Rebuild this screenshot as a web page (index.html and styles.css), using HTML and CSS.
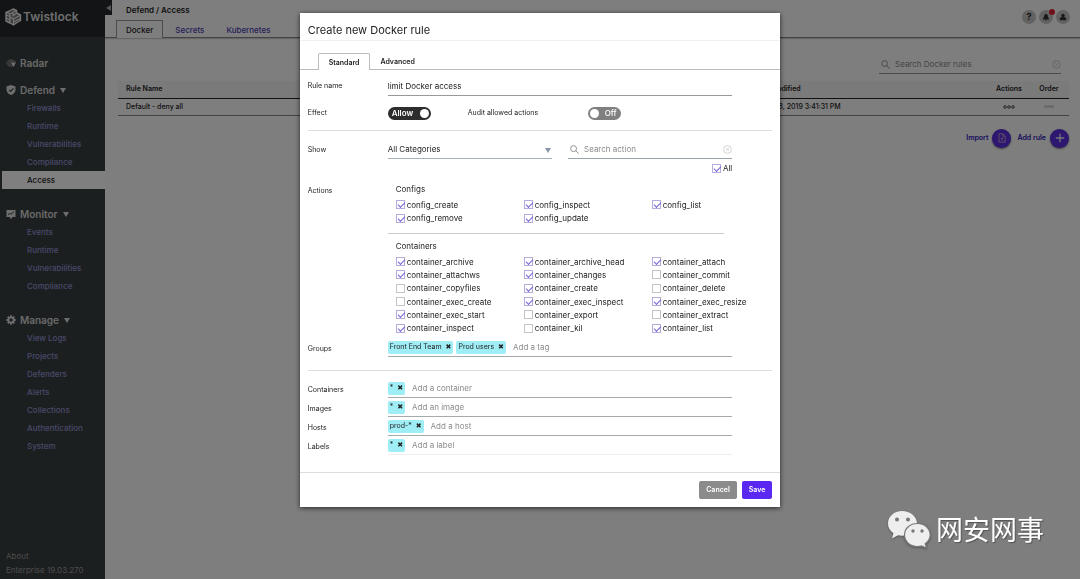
FILE: index.html
```html
<!DOCTYPE html>
<html lang="en">
<head>
<meta charset="utf-8">
<title>Twistlock - Defend / Access</title>
<link rel="stylesheet" href="styles.css">
</head>
<body>
<div class="app">
  <aside class="sidebar">
    <div class="brand">
      <svg class="brand-mark" viewBox="0 0 17 18" fill="none" stroke="#eee" stroke-width="1.200" stroke-linejoin="round">
        <path d="M1 4.500L4.500 3 8 1l3.500 1.500V5L15.500 7v5.500L12 14.500 8.500 17 5 15 1 13z" fill="#777" stroke-width="1.400"/>
        <path d="M1 4.500L5 6l6.500-3.500M5 6v2.500L1 7M5 8.500v6.500M8.500 17v-6L5 9M8.500 11l7-4M8.500 14l7-3.500M8 5v3l3.500-3M1 10l4 2"/>
      </svg>
      <span class="brand-name">Twistlock</span>
    </div>
    <button class="collapse" aria-label="Collapse menu"><svg viewBox="0 0 5 6"><path d="M5 0v6L0 3z" fill="#aaa"/></svg></button>
    <nav class="menu">
      <div class="group group-radar">
        <a class="head" href="#"><svg class="head-icon" viewBox="0 0 10 10"><path d="M.5 3Q5-.5 9.500 3v1.500H4zM0 4l3.500.5L7 9Q1 9.500 0 4z" fill="#777"/><path d="M4.500 4.500H10L7.500 9z" fill="#ddd"/></svg>Radar</a>
      </div>
      <div class="group">
        <a class="head" href="#"><svg class="head-icon" viewBox="0 0 10 10"><path d="M5 0l4.500 1.500V5Q9 8.500 5 10 1 8.500.5 5V1.500z" fill="#ddd"/><path d="M3 4.800l1.600 1.600L7.500 3.400" fill="none" stroke="#383e40" stroke-width="1.200"/></svg>Defend<i class="caret"></i></a>
        <a class="item" href="#">Firewalls</a>
        <a class="item" href="#">Runtime</a>
        <a class="item" href="#">Vulnerabilities</a>
        <a class="item" href="#">Compliance</a>
        <a class="item active" href="#">Access</a>
      </div>
      <div class="group">
        <a class="head" href="#"><svg class="head-icon" viewBox="0 0 10 10"><path d="M.5 1h9v7H6v1.500H4V8H.5z" fill="#ddd"/><path d="M2 5.800l2-1.500 1 1L8 2.500" fill="none" stroke="#383e40"/></svg>Monitor<i class="caret"></i></a>
        <a class="item" href="#">Events</a>
        <a class="item" href="#">Runtime</a>
        <a class="item" href="#">Vulnerabilities</a>
        <a class="item" href="#">Compliance</a>
      </div>
      <div class="group">
        <a class="head" href="#"><svg class="head-icon" viewBox="0 0 10 10" fill="none" stroke="#ddd" stroke-width="1.800"><circle cx="5" cy="5" r="2.700"/><path d="M5 .3v1.700M5 8v1.700M.3 5H2M8 5h1.700M1.700 1.700l1.200 1.200M7.100 7.100l1.200 1.200M1.700 8.300l1.200-1.200M7.100 2.900l1.200-1.200"/></svg>Manage<i class="caret"></i></a>
        <a class="item" href="#">View Logs</a>
        <a class="item" href="#">Projects</a>
        <a class="item" href="#">Defenders</a>
        <a class="item" href="#">Alerts</a>
        <a class="item" href="#">Collections</a>
        <a class="item" href="#">Authentication</a>
        <a class="item" href="#">System</a>
      </div>
    </nav>
    <footer class="version"><span>About</span><span>Enterprise 19.03.270</span></footer>
  </aside>

  <main class="main">
    <header class="topbar">
      <div class="topbar-left">
        <h1 class="crumb">Defend / Access</h1>
        <nav class="tabs">
          <a class="tab current" href="#">Docker</a>
          <a class="tab" href="#">Secrets</a>
          <a class="tab" href="#">Kubernetes</a>
        </nav>
      </div>
      <div class="tools">
        <button class="tool" aria-label="Help">?</button>
        <button class="tool" aria-label="Notifications"><svg viewBox="0 0 10 10"><path d="M5 1Q7.500 1.500 7.500 4.500L9 8H1l1.500-3.500Q2.500 1.500 5 1zM4 8.500h2L5 10z" fill="#333"/></svg><i class="dot"></i></button>
        <button class="tool" aria-label="Account"><svg viewBox="0 0 10 10"><circle cx="5" cy="3" r="2.200" fill="#333"/><path d="M1 9V7Q1 5 3.500 5h3Q9 5 9 7v2z" fill="#333"/></svg></button>
      </div>
    </header>
    <section class="content">
      <label class="search page-search">
        <svg class="lens" viewBox="0 0 10 10" fill="none" stroke="currentColor"><circle cx="4" cy="4" r="3.200"/><path d="M6.300 6.300L9.500 9.500"/></svg>
        <input type="text" placeholder="Search Docker rules" aria-label="Search Docker rules">
        <svg class="clear" viewBox="0 0 10 10" fill="none" stroke="currentColor" stroke-width=".8"><circle cx="5" cy="5" r="4.300"/><path d="M3.300 3.300l3.400 3.400M6.700 3.300L3.300 6.700"/></svg>
      </label>
      <table class="rules">
        <thead><tr><th>Rule Name</th><th class="col-date">Modified</th><th class="col-act">Actions</th><th class="col-order">Order</th></tr></thead>
        <tbody><tr><td>Default - deny all</td><td class="col-date">Apr 8, 2019 3:41:31 PM</td>
          <td class="col-act"><svg class="dots" viewBox="0 0 12 4" fill="none" stroke="#222" stroke-width=".8"><circle cx="2" cy="2" r="1.300"/><circle cx="6" cy="2" r="1.300"/><circle cx="10" cy="2" r="1.300"/></svg></td>
          <td class="col-order"><i class="grip"></i></td></tr></tbody>
      </table>
      <div class="page-actions">
        <button class="page-action">Import<span class="disc"><svg viewBox="0 0 10 10" fill="none" stroke="#c8a8c8" stroke-width=".9"><path d="M2 .8h4l2.200 2.200v6.200H2zM5.800 1v2.200H8M5 8V4.800M3.700 6L5 4.700 6.300 6"/></svg></span></button>
        <button class="page-action">Add rule<span class="disc"><svg viewBox="0 0 10 10" fill="none" stroke="#eee" stroke-width="1.300"><path d="M5 .8v8.400M.8 5h8.400"/></svg></span></button>
      </div>
    </section>
  </main>
</div>

<div class="backdrop">
  <form class="modal" role="dialog" aria-labelledby="title">
    <h2 class="modal-title" id="title">Create new Docker rule</h2>
    <div class="modal-tabs">
      <button type="button" class="modal-tab selected">Standard</button>
      <button type="button" class="modal-tab">Advanced</button>
    </div>
    <div class="modal-body">
      <div class="row row-name">
        <label for="name">Rule name</label>
        <input class="line-input" id="name" type="text" value="limit Docker access">
      </div>
      <div class="row row-effect">
        <label for="effect">Effect</label>
        <div class="effect">
          <span class="toggle on"><input id="effect" type="checkbox" checked><span>Allow</span></span>
          <label class="audit" for="audit">Audit allowed actions</label>
          <span class="toggle"><input id="audit" type="checkbox"><span>Off</span></span>
        </div>
      </div>
      <div class="row row-show">
        <label for="show">Show</label>
        <div class="filters">
          <div class="select"><select id="show"><option>All Categories</option></select></div>
          <div class="filter-search">
            <label class="search">
              <svg class="lens" viewBox="0 0 10 10" fill="none" stroke="currentColor"><circle cx="4" cy="4" r="3.300"/><path d="M6.400 6.400L9.500 9.500"/></svg>
              <input type="text" placeholder="Search action" aria-label="Search action">
              <svg class="clear" viewBox="0 0 10 10" fill="none" stroke="currentColor" stroke-width=".7"><circle cx="5" cy="5" r="4.300"/><path d="M3.300 3.300l3.400 3.400M6.700 3.300L3.300 6.700"/></svg>
            </label>
            <label class="check all"><input type="checkbox" checked>All</label>
          </div>
        </div>
      </div>
      <div class="row row-actions">
        <span class="row-label">Actions</span>
        <div class="sets">
          <fieldset class="set">
            <legend>Configs</legend>
            <div class="checks two">
              <label class="check"><input type="checkbox" checked>config_create</label>
              <label class="check"><input type="checkbox" checked>config_inspect</label>
              <label class="check"><input type="checkbox" checked>config_list</label>
              <label class="check"><input type="checkbox" checked>config_remove</label>
              <label class="check"><input type="checkbox" checked>config_update</label>
            </div>
          </fieldset>
          <hr class="set-rule">
          <fieldset class="set">
            <legend>Containers</legend>
            <div class="checks six">
              <label class="check"><input type="checkbox" checked>container_archive</label>
              <label class="check"><input type="checkbox" checked>container_archive_head</label>
              <label class="check"><input type="checkbox" checked>container_attach</label>
              <label class="check"><input type="checkbox" checked>container_attachws</label>
              <label class="check"><input type="checkbox" checked>container_changes</label>
              <label class="check"><input type="checkbox">container_commit</label>
              <label class="check"><input type="checkbox">container_copyfiles</label>
              <label class="check"><input type="checkbox" checked>container_create</label>
              <label class="check"><input type="checkbox">container_delete</label>
              <label class="check"><input type="checkbox">container_exec_create</label>
              <label class="check"><input type="checkbox" checked>container_exec_inspect</label>
              <label class="check"><input type="checkbox" checked>container_exec_resize</label>
              <label class="check"><input type="checkbox" checked>container_exec_start</label>
              <label class="check"><input type="checkbox">container_export</label>
              <label class="check"><input type="checkbox">container_extract</label>
              <label class="check"><input type="checkbox" checked>container_inspect</label>
              <label class="check"><input type="checkbox">container_kil</label>
              <label class="check"><input type="checkbox" checked>container_list</label>
            </div>
          </fieldset>
        </div>
      </div>
      <div class="row row-tags row-groups">
        <label for="groups">Groups</label>
        <div class="tags"><span class="tag">Front End Team<button type="button" aria-label="Remove Front End Team">✖</button></span><span class="tag">Prod users<button type="button" aria-label="Remove Prod users">✖</button></span><input id="groups" type="text" placeholder="Add a tag"></div>
      </div>
      <div class="scope">
        <div class="row row-tags">
          <label for="containers">Containers</label>
          <div class="tags"><span class="tag">*<button type="button" aria-label="Remove">✖</button></span><input id="containers" type="text" placeholder="Add a container"></div>
        </div>
        <div class="row row-tags">
          <label for="images">Images</label>
          <div class="tags"><span class="tag">*<button type="button" aria-label="Remove">✖</button></span><input id="images" type="text" placeholder="Add an image"></div>
        </div>
        <div class="row row-tags">
          <label for="hosts">Hosts</label>
          <div class="tags"><span class="tag">prod-*<button type="button" aria-label="Remove prod">✖</button></span><input id="hosts" type="text" placeholder="Add a host"></div>
        </div>
        <div class="row row-tags">
          <label for="labels">Labels</label>
          <div class="tags faint"><span class="tag">*<button type="button" aria-label="Remove">✖</button></span><input id="labels" type="text" placeholder="Add a label"></div>
        </div>
      </div>
    </div>
    <footer class="modal-foot">
      <button type="button" class="btn">Cancel</button>
      <button type="submit" class="btn primary">Save</button>
    </footer>
  </form>
</div>

<div class="watermark" lang="zh">
  <svg viewBox="0 0 44 38">
    <path d="M15 1C7 1 1 6.500 1 13.500c0 4 2 7.500 5.500 9.700L5 28.500l6-3.300c1.300.3 2.600.5 4 .5 8 0 15-5 15-12.200S23 1 15 1z" fill="#eee"/>
    <path d="M30.500 13.500c-7.500 0-13 5-13 11.500s5.500 11.500 13 11.500c1.400 0 2.700-.2 4-.5l5 2-1.300-4.200c3-2.200 5-5.200 5-8.800 0-6.500-5.500-11.500-12.700-11.500z" fill="#eee" stroke="#777" stroke-width="1.200"/>
    <g fill="#777"><circle cx="10" cy="9.500" r="2"/><circle cx="21" cy="9.500" r="2"/><circle cx="26" cy="21" r="1.700"/><circle cx="35" cy="21" r="1.700"/></g>
  </svg>
  <span>网安网事</span>
</div>
</body>
</html>
```
FILE: styles.css
```css
* { box-sizing: border-box; }
body { margin: 0; font: 8px/12px Inter, "Liberation Sans", sans-serif; color: #222; background: #fdfdfd; }
a { color: inherit; text-decoration: none; }
button, input, select { font: inherit; color: inherit; border: 0; padding: 0; margin: 0; background: none; }
input[type="text"] { min-width: 0; outline: 0; }

.app { display: flex; min-height: 100vh; }

/* Sidebar */
.sidebar { position: relative; display: flex; flex-direction: column; flex: 0 0 105px; background: #383e40; color: #ddd; }
.brand { display: flex; align-items: center; gap: 1px; height: 37px; padding: 0 0 4px 5px; background: #24282c; }
.brand-mark { width: 17px; height: 18px; }
.brand-name { font-size: 12px; font-weight: 600; }
.collapse { position: absolute; top: 0; right: -7px; width: 8px; height: 15px; background: #24282c; display: grid; place-items: center; }
.collapse svg { width: 5px; height: 6px; }
.menu { padding-top: 17px; flex: 1; }
.group { margin-bottom: 16px; }
.group-radar { margin-bottom: 9px; }
.head { display: flex; align-items: center; height: 18px; padding-left: 6px; font-size: 10px; font-weight: 600; color: #d4d4d4; }
.head-icon { width: 10px; height: 10px; margin-right: 4px; }
.caret { margin-left: 5px; border: 3px solid transparent; border-top: 5px solid #ddd; border-bottom: 0; }
.item { display: flex; align-items: center; height: 18px; margin-left: 2px; padding-left: 25px; color: #9292d0; font-weight: 500; }
.item.active { background: #fff; color: #222; }
.version { display: flex; flex-direction: column; gap: 2px; padding: 0 6px 3px; color: #999; }

/* Page */
.main { flex: 1; min-width: 0; }
.topbar { display: flex; justify-content: space-between; height: 38px; padding: 0 10px 0 11px; border-bottom: 1px solid #888; box-shadow: 0 1px 1px #ccc; }
.topbar-left { display: flex; flex-direction: column; justify-content: space-between; }
.crumb { margin: 0; padding: 4px 10px 0; font-size: 8px; font-weight: 600; }
.tabs { display: flex; gap: 2px; margin-bottom: -1px; }
.tab { padding: 3px 9px 2px; border: 1px solid transparent; border-bottom: 0; color: #4a3fb0; font-weight: 500; }
.tab.current { border-color: #999; background: #fdfdfd; color: #222; }
.tools { display: flex; gap: 3px; padding-top: 10px; }
.tool { position: relative; display: grid; place-items: center; width: 14px; height: 14px; border-radius: 50%; background: #c4c4c4; font-size: 9px; font-weight: 700; }
.tool svg { width: 8px; height: 8px; }
.dot { position: absolute; top: -1px; right: -2px; width: 6px; height: 6px; border-radius: 50%; background: #e02030; }
.content { display: flex; flex-direction: column; padding: 17px 11px 0 13px; }
.search { display: flex; align-items: center; height: 19px; border-bottom: 1px solid #aaa; color: #888; }
.search input { flex: 1; padding: 0 5px; }
.search input::placeholder, .tags input::placeholder { color: #8b8b8b; opacity: 1; }
.lens { width: 9px; height: 9px; margin-left: 2px; }
.clear { width: 9px; height: 9px; color: #bbb; }
.page-search { align-self: flex-end; width: 182px; margin-right: 8px; border-color: #999; }
.rules { width: 100%; margin-top: 7px; border-collapse: collapse; table-layout: fixed; }
.rules th { height: 17px; padding: 0 8px; background: #f4f4f4; border-bottom: 1px solid #222; font-weight: 600; text-align: left; font-size: 7px; }
.rules td { height: 17px; padding: 0 8px; border-bottom: 1px solid #888; font-weight: 500; font-size: 7px; }
.rules .col-date { width: 32%; padding: 0 0 0 80px; }
.rules th.col-date { padding-left: 86px; }
.rules .col-act { width: 40px; padding: 0; text-align: center; }
.rules .col-order { width: 40px; padding: 0; text-align: center; }
.dots { width: 12px; height: 4px; vertical-align: middle; }
.grip { display: inline-block; width: 10px; height: 3px; background: #d8d8d8; vertical-align: middle; }
.page-actions { display: flex; justify-content: flex-end; gap: 6px; margin-top: 13px; }
.page-action { display: flex; align-items: center; gap: 4px; color: #2a12b8; font-weight: 600; font-size: 7px; }
.disc { display: grid; place-items: center; width: 19px; height: 19px; border-radius: 50%; background: #5b2ee0; box-shadow: 0 1px 2px #777; }
.disc svg { width: 10px; height: 10px; }

/* Dialog */
.backdrop { position: fixed; inset: 0; display: flex; justify-content: center; align-items: flex-start; padding-top: 13px; background: rgba(0, 0, 0, .5); }
.modal { width: 44.5%; background: #fff; box-shadow: 0 1px 5px rgba(0, 0, 0, .7); font-size: 7px; }
.modal-title { margin: 0; padding: 11px 8px 3px; border-bottom: 1px solid #f0f0f0; font-size: 11px; line-height: 13px; font-weight: 400; }
.modal-tabs { display: flex; align-items: flex-end; padding: 12px 18px 0; border-bottom: 1px solid #bbb; }
.modal-tab { height: 15px; padding: 1px 10px 0; font-weight: 600; }
.modal-tab.selected { margin-bottom: -1px; height: 17px; border: 1px solid #bbb; border-bottom: 0; border-radius: 2px 2px 0 0; background: #fff; }
.modal-body { padding: 8px 8px 17px; }
.row { display: grid; grid-template-columns: 80px minmax(0, 1fr) 40px; align-items: center; }
.line-input { height: 18px; padding-bottom: 2px; border-bottom: 1px solid #999; font-size: 8px; }
.row-name label { padding-bottom: 2px; }
.effect { display: flex; align-items: center; }
.row-effect { height: 35px; border-bottom: 1px solid #ddd; }
.toggle { position: relative; display: inline-flex; align-items: center; height: 13px; width: 33px; border-radius: 7px; background: #808080; color: #fff; font-size: 8px; font-weight: 500; }
.toggle input { appearance: none; width: 9px; height: 9px; margin: 0 6px 0 2px; border-radius: 50%; background: #fff; }
.toggle.on { flex-direction: row-reverse; justify-content: space-between; width: 43px; padding-left: 4px; background: #2d2d2d; font-weight: 600; }
.toggle.on input { margin: 0 2px; }
.audit { width: 120px; margin-left: 37px; }
.row-show { align-items: start; padding-top: 9px; }
.row-show > label { padding-top: 4px; }
.filters { display: grid; grid-template-columns: 1fr 1fr; gap: 16px; }
.select { position: relative; height: 19px; border-bottom: 1px solid #a5b0b8; }
.select select { appearance: none; width: 100%; height: 18px; font-size: 8px; }
.select::after { content: ""; position: absolute; right: 1px; top: 8px; border: 3px solid transparent; border-top: 5px solid #8696a8; border-bottom: 0; pointer-events: none; }
.filter-search { display: flex; flex-direction: column; }
.filter-search .search { border-color: #99a5a8; font-size: 8px; }
.check { display: flex; align-items: center; gap: 2px; font-size: 8px; }
.check input { appearance: none; flex: none; width: 9px; height: 9px; border: 1px solid #c4c4c4; background: #fff; }
.check input:checked { border-color: #b4acdf; }
.check input:checked::before { content: ""; display: block; width: 6px; height: 3px; margin: 1px 0 0 1px; border: solid #7466d8; border-width: 0 0 1px 1px; transform: rotate(-45deg); }
.all { align-self: flex-end; margin-top: 3px; }
.row-actions { align-items: start; padding-top: 9px; }
.row-label { padding-top: 2px; }
.set { min-width: 0; margin: 0; padding: 0 0 0 8px; border: 0; }
.set legend { padding: 0; font-size: 8px; }
.checks { display: grid; grid-template-columns: repeat(3, 128px); grid-auto-rows: 1fr; margin-top: 3px; }
.two { height: 27px; }
.six { height: 80px; }
.set-rule { height: 1px; margin: 8px 8px 6px 0; border: 0; background: #ccc; }
.row-groups { padding: 3px 0 13px; border-bottom: 1px solid #ddd; }
.scope { padding-top: 8px; }
.tags { display: flex; align-items: center; gap: 3px; height: 19px; border-bottom: 1px solid #a5aaaa; }
.tags.faint { border-color: #eee; }
.tags input { flex: 1; margin-left: 4px; font-size: 8px; }
.row-tags label { padding-top: 2px; }
.tag { display: flex; align-items: center; gap: 4px; height: 13px; padding: 0 2px; border-radius: 2px; background: #9fedf5; }
.tag button { font: 7px/12px "DejaVu Sans", sans-serif; }
.modal-foot { display: flex; justify-content: flex-end; gap: 5px; padding: 8px; border-top: 1px solid #ddd; }
.btn { height: 18px; padding: 0 7px; border-radius: 2px; background: #8b8b8b; color: #fff; font-weight: 600; }
.btn.primary { background: #5a28f0; }

.watermark { position: fixed; right: 36px; bottom: 31px; display: flex; align-items: center; gap: 5px; color: #fff; font: 27px/36px "Noto Sans CJK SC", sans-serif; text-shadow: 1px 1px 1px #555; }
.watermark svg { width: 44px; height: 38px; filter: drop-shadow(0 1px 1px #555); }
```
